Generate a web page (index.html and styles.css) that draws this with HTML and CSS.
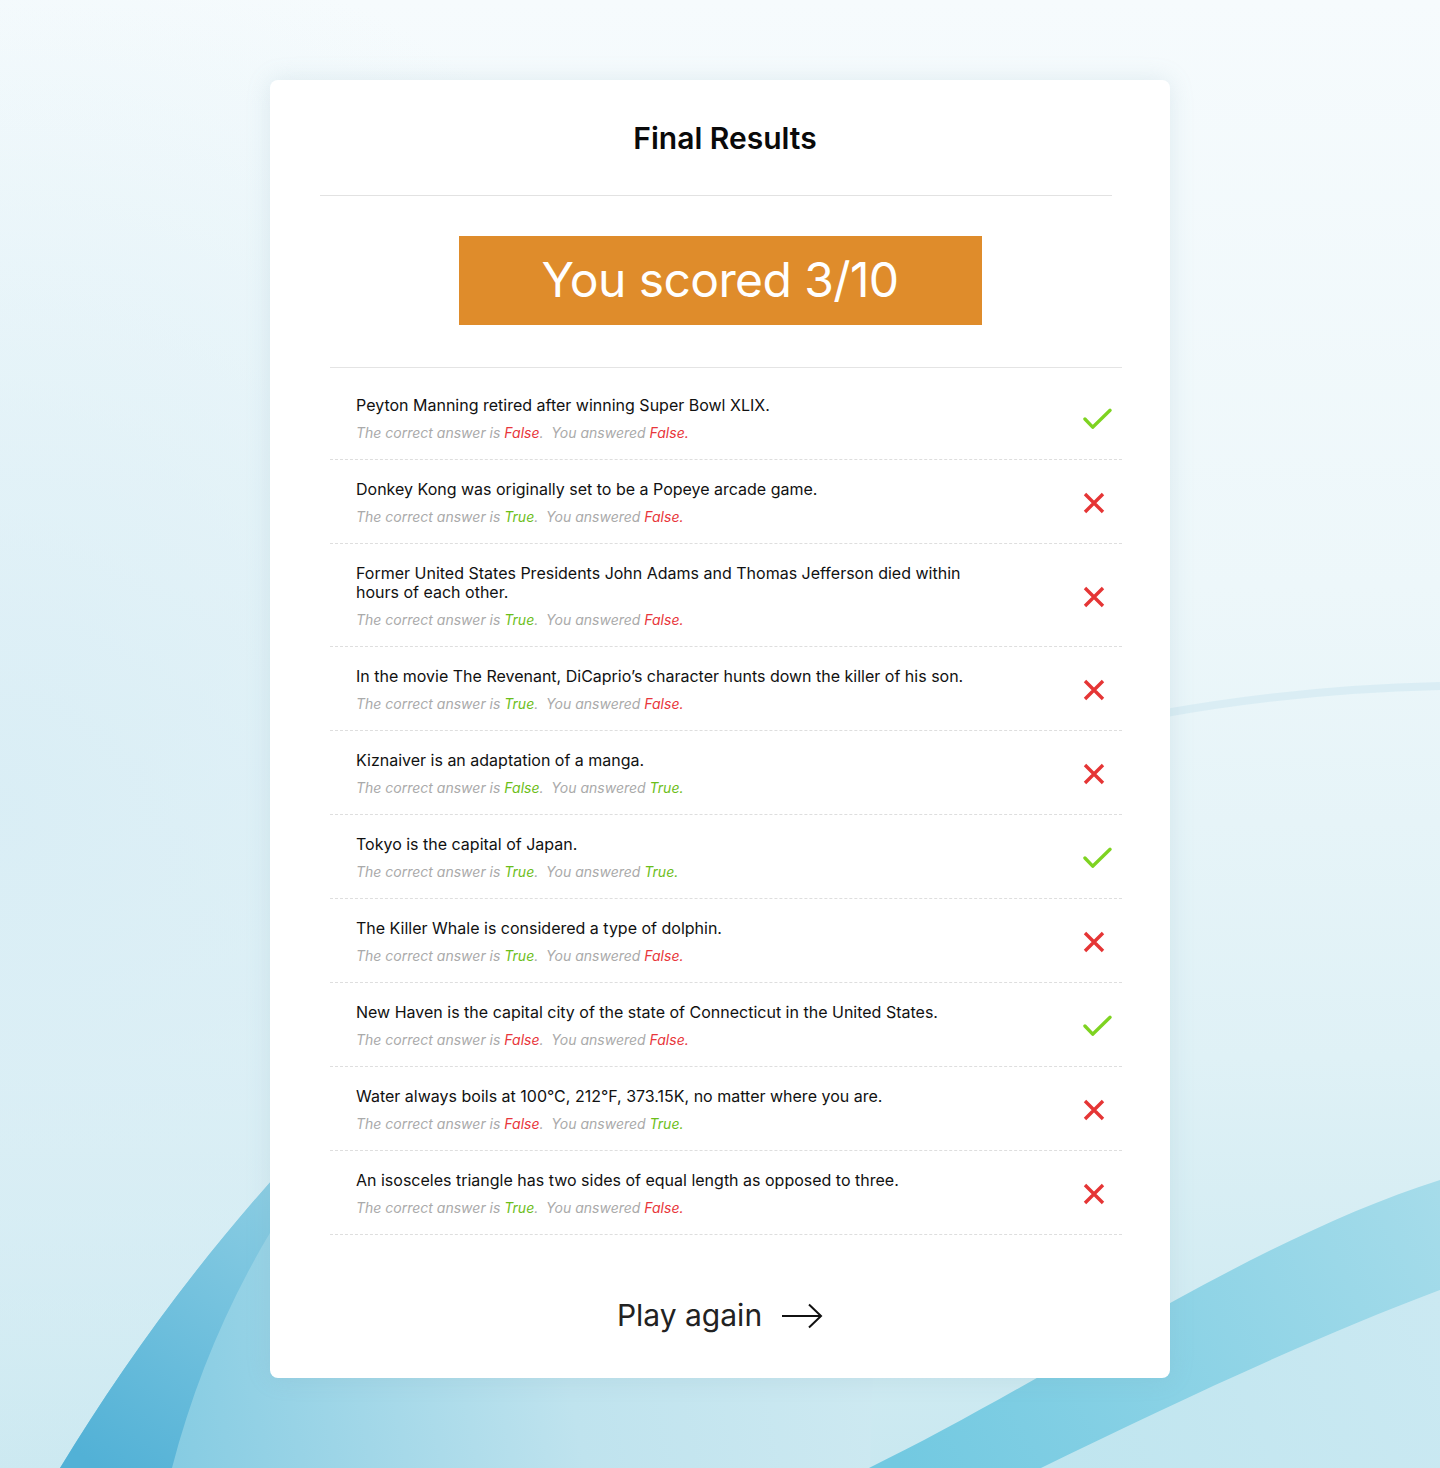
FILE: index.html
```html
<!DOCTYPE html>
<html lang="en">
<head>
<meta charset="utf-8">
<title>Final Results</title>
<link rel="stylesheet" href="styles.css">
</head>
<body>
<svg class="backdrop" width="1440" height="1468" viewBox="0 0 1440 1468" preserveAspectRatio="none" aria-hidden="true">
  <defs>
    <linearGradient id="bg" x1="0" y1="0" x2="0" y2="1">
      <stop offset="0" stop-color="#f6fbfd"/>
      <stop offset="0.4" stop-color="#edf7fa"/>
      <stop offset="0.72" stop-color="#dff1f6"/>
      <stop offset="1" stop-color="#c9e8f0"/>
    </linearGradient>
    <radialGradient id="leftTint" cx="0" cy="0.55" r="0.6">
      <stop offset="0" stop-color="#d8edf5" stop-opacity="0.9"/>
      <stop offset="1" stop-color="#d8edf5" stop-opacity="0"/>
    </radialGradient>
    <linearGradient id="blMid" gradientUnits="userSpaceOnUse" x1="120" y1="1440" x2="860" y2="1300">
      <stop offset="0" stop-color="#7fc9e1"/>
      <stop offset="0.6" stop-color="#bfe3ee"/>
      <stop offset="1" stop-color="#cde9f1"/>
    </linearGradient>
    <linearGradient id="blDark" gradientUnits="userSpaceOnUse" x1="100" y1="1468" x2="300" y2="1180">
      <stop offset="0" stop-color="#52b1d6"/>
      <stop offset="1" stop-color="#8fcfe4"/>
    </linearGradient>
    <linearGradient id="brBand" gradientUnits="userSpaceOnUse" x1="900" y1="1468" x2="1440" y2="1180">
      <stop offset="0" stop-color="#72c9e1"/>
      <stop offset="1" stop-color="#a6dcea"/>
    </linearGradient>
    <linearGradient id="brLight" gradientUnits="userSpaceOnUse" x1="1040" y1="1468" x2="1440" y2="1290">
      <stop offset="0" stop-color="#bfe5ef"/>
      <stop offset="1" stop-color="#cbe9f2"/>
    </linearGradient>
  </defs>
  <rect width="1440" height="1468" fill="url(#bg)"/>
  <rect x="0" y="0" width="1440" height="1468" fill="url(#leftTint)"/>
  <!-- bottom-left ribbon -->
  <path d="M60 1468 C 120 1370, 190 1270, 290 1160 L 880 1160 L 870 1468 Z" fill="url(#blMid)"/>
  <path d="M60 1468 C 120 1370, 190 1270, 290 1160 L 320 1160 C 250 1250, 200 1360, 172 1468 Z" fill="url(#blDark)"/>
  <!-- bottom-right ribbon -->
  <path d="M1041 1468 C 1180 1400, 1320 1335, 1440 1290 L 1440 1468 Z" fill="url(#brLight)"/>
  <path d="M869 1468 C 1050 1380, 1250 1240, 1440 1180 L 1440 1290 C 1320 1335, 1180 1400, 1041 1468 Z" fill="url(#brBand)"/>
  <!-- faint arc -->
  <path d="M1160 714 C 1260 696, 1350 688, 1440 686" stroke="#d3eaf2" stroke-width="8" fill="none" opacity="0.7"/>
</svg>

<main class="card">
  <header class="card-head">
    <h1 class="title">Final Results</h1>
  </header>

  <div class="score">You scored 3/10</div>

  <ul class="results">
    <li class="row">
      <div class="qa">
        <p class="question">Peyton Manning retired after winning Super Bowl XLIX.</p>
        <p class="answer">The correct answer is <span class="false">False</span>.&nbsp; You answered <span class="false">False.</span></p>
      </div>
      <span class="mark"><svg width="30" height="22" viewBox="0 0 30 22"><path d="M2 11 L10 19.5 L28 2" fill="none" stroke="#7ed321" stroke-width="3.4" stroke-linecap="round" stroke-linejoin="round"/></svg></span>
    </li>
    <li class="row">
      <div class="qa">
        <p class="question">Donkey Kong was originally set to be a Popeye arcade game.</p>
        <p class="answer">The correct answer is <span class="true">True</span>.&nbsp; You answered <span class="false">False.</span></p>
      </div>
      <span class="mark"><svg width="22" height="22" viewBox="0 0 22 22"><path d="M2 2 L20 20 M20 2 L2 20" fill="none" stroke="#e53535" stroke-width="3.4"/></svg></span>
    </li>
    <li class="row">
      <div class="qa">
        <p class="question">Former United States Presidents John Adams and Thomas Jefferson died within hours of each other.</p>
        <p class="answer">The correct answer is <span class="true">True</span>.&nbsp; You answered <span class="false">False.</span></p>
      </div>
      <span class="mark"><svg width="22" height="22" viewBox="0 0 22 22"><path d="M2 2 L20 20 M20 2 L2 20" fill="none" stroke="#e53535" stroke-width="3.4"/></svg></span>
    </li>
    <li class="row">
      <div class="qa">
        <p class="question">In the movie The Revenant, DiCaprio’s character hunts down the killer of his son.</p>
        <p class="answer">The correct answer is <span class="true">True</span>.&nbsp; You answered <span class="false">False.</span></p>
      </div>
      <span class="mark"><svg width="22" height="22" viewBox="0 0 22 22"><path d="M2 2 L20 20 M20 2 L2 20" fill="none" stroke="#e53535" stroke-width="3.4"/></svg></span>
    </li>
    <li class="row">
      <div class="qa">
        <p class="question">Kiznaiver is an adaptation of a manga.</p>
        <p class="answer">The correct answer is <span class="true">False</span>.&nbsp; You answered <span class="true">True.</span></p>
      </div>
      <span class="mark"><svg width="22" height="22" viewBox="0 0 22 22"><path d="M2 2 L20 20 M20 2 L2 20" fill="none" stroke="#e53535" stroke-width="3.4"/></svg></span>
    </li>
    <li class="row">
      <div class="qa">
        <p class="question">Tokyo is the capital of Japan.</p>
        <p class="answer">The correct answer is <span class="true">True</span>.&nbsp; You answered <span class="true">True.</span></p>
      </div>
      <span class="mark"><svg width="30" height="22" viewBox="0 0 30 22"><path d="M2 11 L10 19.5 L28 2" fill="none" stroke="#7ed321" stroke-width="3.4" stroke-linecap="round" stroke-linejoin="round"/></svg></span>
    </li>
    <li class="row">
      <div class="qa">
        <p class="question">The Killer Whale is considered a type of dolphin.</p>
        <p class="answer">The correct answer is <span class="true">True</span>.&nbsp; You answered <span class="false">False.</span></p>
      </div>
      <span class="mark"><svg width="22" height="22" viewBox="0 0 22 22"><path d="M2 2 L20 20 M20 2 L2 20" fill="none" stroke="#e53535" stroke-width="3.4"/></svg></span>
    </li>
    <li class="row">
      <div class="qa">
        <p class="question">New Haven is the capital city of the state of Connecticut in the United States.</p>
        <p class="answer">The correct answer is <span class="false">False</span>.&nbsp; You answered <span class="false">False.</span></p>
      </div>
      <span class="mark"><svg width="30" height="22" viewBox="0 0 30 22"><path d="M2 11 L10 19.5 L28 2" fill="none" stroke="#7ed321" stroke-width="3.4" stroke-linecap="round" stroke-linejoin="round"/></svg></span>
    </li>
    <li class="row">
      <div class="qa">
        <p class="question">Water always boils at 100°C, 212°F, 373.15K, no matter where you are.</p>
        <p class="answer">The correct answer is <span class="false">False</span>.&nbsp; You answered <span class="true">True.</span></p>
      </div>
      <span class="mark"><svg width="22" height="22" viewBox="0 0 22 22"><path d="M2 2 L20 20 M20 2 L2 20" fill="none" stroke="#e53535" stroke-width="3.4"/></svg></span>
    </li>
    <li class="row">
      <div class="qa">
        <p class="question">An isosceles triangle has two sides of equal length as opposed to three.</p>
        <p class="answer">The correct answer is <span class="true">True</span>.&nbsp; You answered <span class="false">False.</span></p>
      </div>
      <span class="mark"><svg width="22" height="22" viewBox="0 0 22 22"><path d="M2 2 L20 20 M20 2 L2 20" fill="none" stroke="#e53535" stroke-width="3.4"/></svg></span>
    </li>
  </ul>

  <div class="play-wrap">
    <a class="play" href="#">Play again
      <svg class="arrow" width="42" height="26" viewBox="0 0 42 26"><path d="M1 13 H40 M28 1.5 L40 13 L28 24.5" fill="none" stroke="#111" stroke-width="2"/></svg>
    </a>
  </div>
</main>
</body>
</html>
```

FILE: styles.css
```css
* { box-sizing: border-box; }

html, body {
  margin: 0;
  padding: 0;
}

body {
  font-family: Inter, "Noto Sans", "Liberation Sans", sans-serif;
  color: #111;
  min-height: 1468px;
  padding-top: 80px;
  position: relative;
  background: #eef7fa;
}

.backdrop {
  position: absolute;
  left: 0;
  top: 0;
  z-index: 0;
}

.card {
  position: relative;
  z-index: 1;
  width: 900px;
  margin: 0 auto;
  background: #fff;
  border-radius: 8px;
  box-shadow: 0 0 24px rgba(120, 160, 180, 0.18);
  padding: 39px 0 43px;
}

.card-head {
  margin: 0 58px 0 50px;
  border-bottom: 1px solid #e2e2e2;
  padding-bottom: 38px;
}

.title {
  margin: 0;
  padding-left: 18px;
  text-align: center;
  font-size: 30px;
  line-height: 38px;
  font-weight: 600;
  color: #0a0a0a;
}

.score {
  width: 523px;
  height: 89px;
  margin: 40px auto 0;
  background: #df8c2b;
  color: #fff;
  font-size: 48px;
  font-weight: 400;
  letter-spacing: -0.6px;
  display: flex;
  align-items: center;
  justify-content: center;
  padding-bottom: 2px;
}

.results {
  list-style: none;
  margin: 42px 48px 0 60px;
  padding: 8px 0 0;
  border-top: 1px solid #e4e4e4;
}

.row {
  display: flex;
  align-items: center;
  justify-content: space-between;
  padding: 20px 10px 17px 26px;
  border-bottom: 1px dashed #dedede;
}

.qa {
  width: 628px;
}

.question {
  margin: 0;
  font-size: 16px;
  line-height: 19px;
  color: #111;
}

.answer {
  margin: 9px 0 0;
  font-size: 14px;
  line-height: 18px;
  font-style: italic;
  color: #aaaaaa;
}

.true { color: #6cbe1a; }
.false { color: #e8363b; }

.mark {
  width: 29px;
  display: flex;
  justify-content: flex-start;
  align-items: center;
}

.mark svg { display: block; }

.play-wrap {
  margin-top: 60px;
  display: flex;
  justify-content: center;
}

.play {
  display: inline-flex;
  align-items: center;
  gap: 19px;
  font-size: 30px;
  line-height: 40px;
  color: #222;
  text-decoration: none;
  font-weight: 400;
}

.arrow { display: block; margin-top: 2px; }
```
